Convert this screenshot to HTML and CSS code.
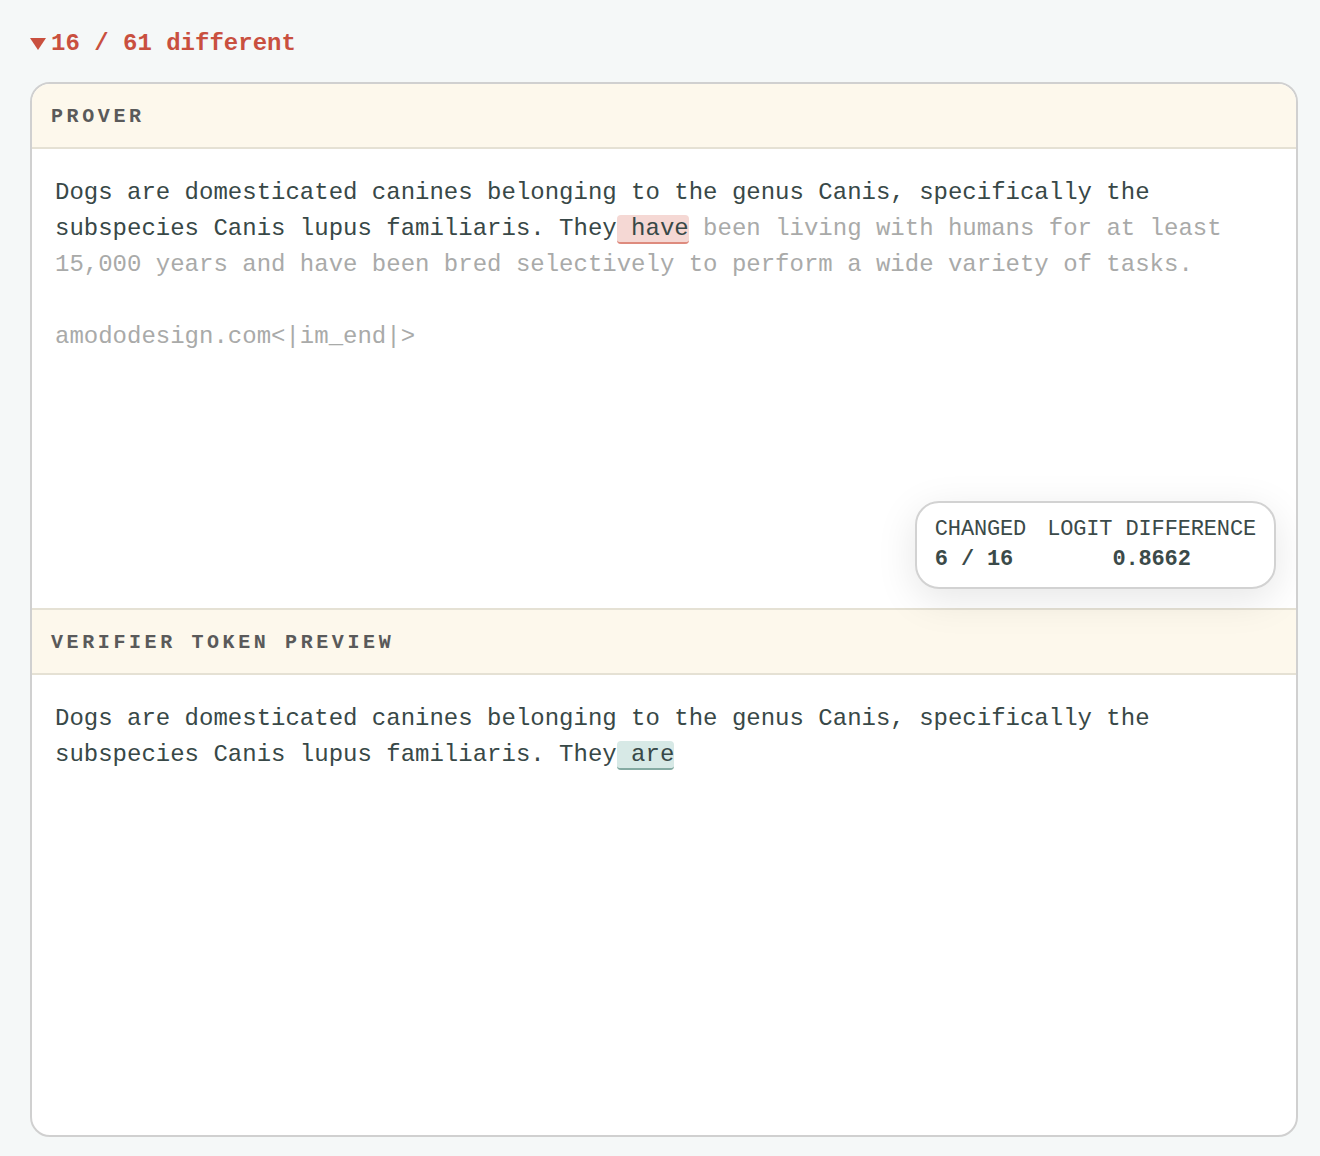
FILE: index.html
```html
<!DOCTYPE html>
<html lang="en">
<head>
    <meta charset="UTF-8">
    <meta name="viewport" content="width=device-width, initial-scale=1.0">
    <title>Token Diff</title>
    <link rel="stylesheet" href="styles.css">
</head>
<body>

<div class="page">
    <div class="summary">
        <svg class="caret" width="16" height="12" viewBox="0 0 16 12"><path d="M0 0 H16 L8 12 Z" fill="#c9503f"/></svg>
        <span>16 / 61 different</span>
    </div>

    <div class="card">
        <div class="section-head">PROVER</div>
        <div class="section-body prover">
            <p class="tokens">Dogs are domesticated canines belonging to the genus Canis, specifically the subspecies Canis lupus familiaris. They<span class="tok tok-changed"> have</span><span class="muted"> been living with humans for at least 15,000 years and have been bred selectively to perform a wide variety of tasks.

amododesign.com&lt;|im_end|&gt;</span></p>

            <!-- tooltip de estadisticas -->
            <div class="stats">
                <div class="stat-label">CHANGED</div>
                <div class="stat-label">LOGIT DIFFERENCE</div>
                <div class="stat-value">6 / 16</div>
                <div class="stat-value center">0.8662</div>
            </div>
        </div>

        <div class="section-head">VERIFIER TOKEN PREVIEW</div>
        <div class="section-body verifier">
            <p class="tokens">Dogs are domesticated canines belonging to the genus Canis, specifically the subspecies Canis lupus familiaris. They<span class="tok tok-preview"> are</span></p>
        </div>
    </div>
</div>

</body>
</html>
```

FILE: styles.css
```css
body {
    margin: 0;
    padding: 0;
    background-color: #f5f8f8;
    font-family: "Liberation Mono", "DejaVu Sans Mono", monospace;
    color: #384847;
}
.page {
    padding: 28px 22px 20px 30px;
}
.summary {
    display: flex;
    align-items: center;
    height: 30px;
    color: #c9503f;
    font-size: 24px;
    font-weight: bold;
    margin-bottom: 24px;
}
.caret {
    margin-right: 5px;
    margin-top: 1px;
}
.card {
    border: 2px solid #d0d0d0;
    border-radius: 20px;
    background-color: white;
    overflow: hidden;
}
.section-head {
    height: 62px;
    display: flex;
    align-items: center;
    padding-left: 19px;
    padding-top: 1px;
    background-color: #fdf8ec;
    border-bottom: 2px solid #e5e1d4;
    color: #5a5a5a;
    font-size: 20px;
    font-weight: bold;
    letter-spacing: 3.6px;
}
.section-body {
    height: 460px;
    padding: 26px 23px;
    box-sizing: border-box;
    position: relative;
}
.section-body.prover {
    height: 461px;
    border-bottom: 2px solid #e5e1d4;
}
.tokens {
    margin: 0;
    font-size: 24px;
    line-height: 36px;
    white-space: pre-wrap;
}
.tok {
    border-radius: 4px;
    border-bottom: 2px solid transparent;
}
.tok-changed {
    background-color: #f5d8d4;
    border-bottom-color: #de8b7e;
}
.tok-preview {
    background-color: #d7e9e6;
    border-bottom-color: #84aaa2;
}
.muted {
    color: #a9aaa9;
}
.stats {
    position: absolute;
    right: 20px;
    bottom: 19px;
    display: grid;
    grid-template-columns: auto auto;
    column-gap: 21px;
    padding: 12px 18px;
    background-color: white;
    border: 2px solid #d2d2d2;
    border-radius: 24px;
    box-shadow: 0 10px 40px rgba(0, 0, 0, 0.1);
    font-size: 22px;
    letter-spacing: -0.15px;
    line-height: 30px;
    z-index: 2;
}
.stat-label {
    color: #3b4a49;
}
.stat-value {
    font-weight: bold;
    color: #3b4a49;
}
.stat-value.center {
    text-align: center;
}
```
